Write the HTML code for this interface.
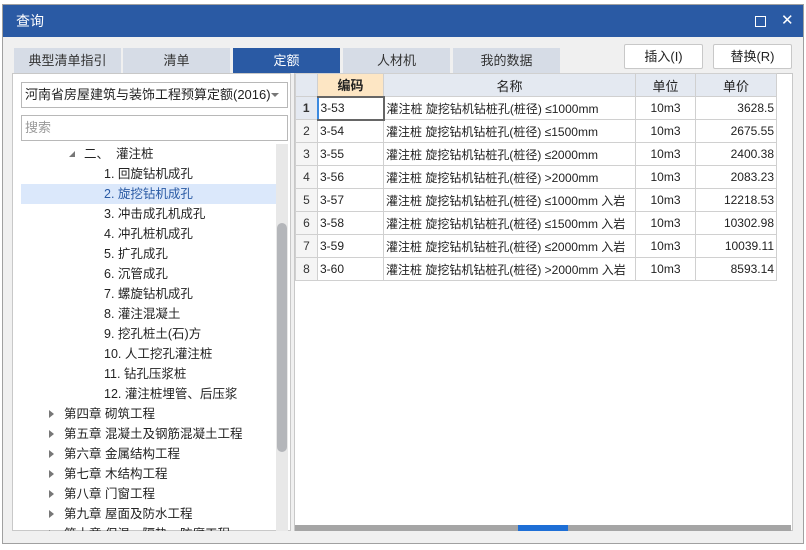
<!DOCTYPE html>
<html><head><meta charset="utf-8"><style>
*{box-sizing:border-box;margin:0;padding:0}
body{width:806px;height:550px;background:#fff;font-family:"Liberation Sans","Noto Sans CJK SC",sans-serif;font-size:12px;color:#222;position:relative;overflow:hidden}
.win{position:absolute;left:2px;top:4px;width:802px;height:540px;background:#f0f0f0;border:1px solid #a0a0a0}
.title{position:absolute;left:0;top:0;width:800px;height:32px;background:#2a5aa4;color:#fff;font-size:14px;line-height:32px;padding-left:13px}
.a{position:absolute}
.tab{position:absolute;top:43px;height:25px;width:107px;background:#d6dce6;text-align:center;line-height:25px;font-size:13px;color:#333}
.tab.on{background:#2a5aa4;color:#fff}
.btn{position:absolute;top:39px;height:25px;width:79px;border:1px solid #c8c8c8;border-radius:2px;background:#fff;text-align:center;line-height:23px;font-size:13px}
.tree div{height:20px;line-height:20px;font-size:12.5px;white-space:nowrap;position:relative}
table{border-collapse:collapse;position:absolute;left:292px;top:68px;table-layout:fixed;width:481px}
td{border:1px solid #d0d0d0;height:23px;font-size:12px;padding:0 2px;white-space:nowrap;overflow:hidden}
th{border:1px solid #d0d0d0;height:23px;background:#e4e9f1;font-weight:normal;font-size:13px}
.n{text-align:center;background:#f5f5f5;color:#333}
.r{text-align:right}.c{text-align:center}
.tri{position:absolute;left:-18px;top:6px;width:0;height:0;border-left:5px solid #777;border-top:4px solid transparent;border-bottom:4px solid transparent}
</style></head><body>
<div class="win">
<div class="title">查询</div>
<div class="a" style="left:752px;top:11px;width:11px;height:11px;border:1.5px solid #fff"></div>
<div class="a" style="left:778px;top:6px;color:#fff;font-size:15px">✕</div>
<div class="tab" style="left:11px">典型清单指引</div>
<div class="tab" style="left:120px">清单</div>
<div class="tab on" style="left:230px">定额</div>
<div class="tab" style="left:340px">人材机</div>
<div class="tab" style="left:450px">我的数据</div>
<div class="btn" style="left:621px">插入(I)</div>
<div class="btn" style="left:710px">替换(R)</div>
<div class="a" style="left:9px;top:68px;width:279px;height:458px;background:#fff;border:1px solid #c8c8c8"></div>
<div class="a" style="left:18px;top:77px;width:267px;height:26px;border:1px solid #b8b8b8;background:#fff;font-size:13px;line-height:24px;padding-left:3px">河南省房屋建筑与装饰工程预算定额(2016)<span style="position:absolute;right:8px;top:10px;border-top:4px solid #777;border-left:4px solid transparent;border-right:4px solid transparent"></span></div>
<div class="a" style="left:18px;top:110px;width:267px;height:26px;border:1px solid #b8b8b8;background:#fff;font-size:13px;line-height:24px;padding-left:3px;color:#999">搜索</div>
<div class="a tree" style="left:18px;top:139px;width:255px;height:387px;overflow:hidden">
<div style="padding-left:63px"><span style="position:absolute;left:48px;top:7px;border-right:6px solid #777;border-top:6px solid transparent"></span>二、&nbsp;&nbsp;灌注桩</div>
<div style="padding-left:83px">1. 回旋钻机成孔</div>
<div style="padding-left:83px;background:#dbe8fb;color:#2a5aa4">2. 旋挖钻机成孔</div>
<div style="padding-left:83px">3. 冲击成孔机成孔</div>
<div style="padding-left:83px">4. 冲孔桩机成孔</div>
<div style="padding-left:83px">5. 扩孔成孔</div>
<div style="padding-left:83px">6. 沉管成孔</div>
<div style="padding-left:83px">7. 螺旋钻机成孔</div>
<div style="padding-left:83px">8. 灌注混凝土</div>
<div style="padding-left:83px">9. 挖孔桩土(石)方</div>
<div style="padding-left:83px">10. 人工挖孔灌注桩</div>
<div style="padding-left:83px">11. 钻孔压浆桩</div>
<div style="padding-left:83px">12. 灌注桩埋管、后压浆</div>
<div style="padding-left:43px"><span class="tri" style="left:28px"></span>第四章 砌筑工程</div>
<div style="padding-left:43px"><span class="tri" style="left:28px"></span>第五章 混凝土及钢筋混凝土工程</div>
<div style="padding-left:43px"><span class="tri" style="left:28px"></span>第六章 金属结构工程</div>
<div style="padding-left:43px"><span class="tri" style="left:28px"></span>第七章 木结构工程</div>
<div style="padding-left:43px"><span class="tri" style="left:28px"></span>第八章 门窗工程</div>
<div style="padding-left:43px"><span class="tri" style="left:28px"></span>第九章 屋面及防水工程</div>
<div style="padding-left:43px"><span class="tri" style="left:28px"></span>第十章 保温、隔热、防腐工程</div>
</div>
<div class="a" style="left:273px;top:139px;width:12px;height:387px;background:#e8e8e8"></div>
<div class="a" style="left:274px;top:218px;width:10px;height:229px;background:#b4b6ba;border-radius:5px"></div>
<div class="a" style="left:291px;top:68px;width:499px;height:458px;background:#fff;border:1px solid #c8c8c8"></div>
<div class="a" style="left:292px;top:520px;width:496px;height:6px;background:#a5a5a5"></div>
<div class="a" style="left:515px;top:520px;width:50px;height:6px;background:#1e6fd6"></div>
<table>
<colgroup><col style="width:22px"><col style="width:66px"><col style="width:252px"><col style="width:60px"><col style="width:81px"></colgroup>
<tr><th></th><th style="background:#fde6c4;font-weight:bold">编码</th><th>名称</th><th>单位</th><th>单价</th></tr>
<tr><td class="n" style="background:#e4e9f1;font-weight:bold">1</td><td style="border:2px solid #666;border-left:2px solid #3c8ae0">3-53</td><td>灌注桩 旋挖钻机钻桩孔(桩径) ≤1000mm</td><td class="c">10m3</td><td class="r">3628.5</td></tr>
<tr><td class="n">2</td><td>3-54</td><td>灌注桩 旋挖钻机钻桩孔(桩径) ≤1500mm</td><td class="c">10m3</td><td class="r">2675.55</td></tr>
<tr><td class="n">3</td><td>3-55</td><td>灌注桩 旋挖钻机钻桩孔(桩径) ≤2000mm</td><td class="c">10m3</td><td class="r">2400.38</td></tr>
<tr><td class="n">4</td><td>3-56</td><td>灌注桩 旋挖钻机钻桩孔(桩径) &gt;2000mm</td><td class="c">10m3</td><td class="r">2083.23</td></tr>
<tr><td class="n">5</td><td>3-57</td><td>灌注桩 旋挖钻机钻桩孔(桩径) ≤1000mm 入岩</td><td class="c">10m3</td><td class="r">12218.53</td></tr>
<tr><td class="n">6</td><td>3-58</td><td>灌注桩 旋挖钻机钻桩孔(桩径) ≤1500mm 入岩</td><td class="c">10m3</td><td class="r">10302.98</td></tr>
<tr><td class="n">7</td><td>3-59</td><td>灌注桩 旋挖钻机钻桩孔(桩径) ≤2000mm 入岩</td><td class="c">10m3</td><td class="r">10039.11</td></tr>
<tr><td class="n">8</td><td>3-60</td><td>灌注桩 旋挖钻机钻桩孔(桩径) &gt;2000mm 入岩</td><td class="c">10m3</td><td class="r">8593.14</td></tr>
</table>
</div>
</body></html>
